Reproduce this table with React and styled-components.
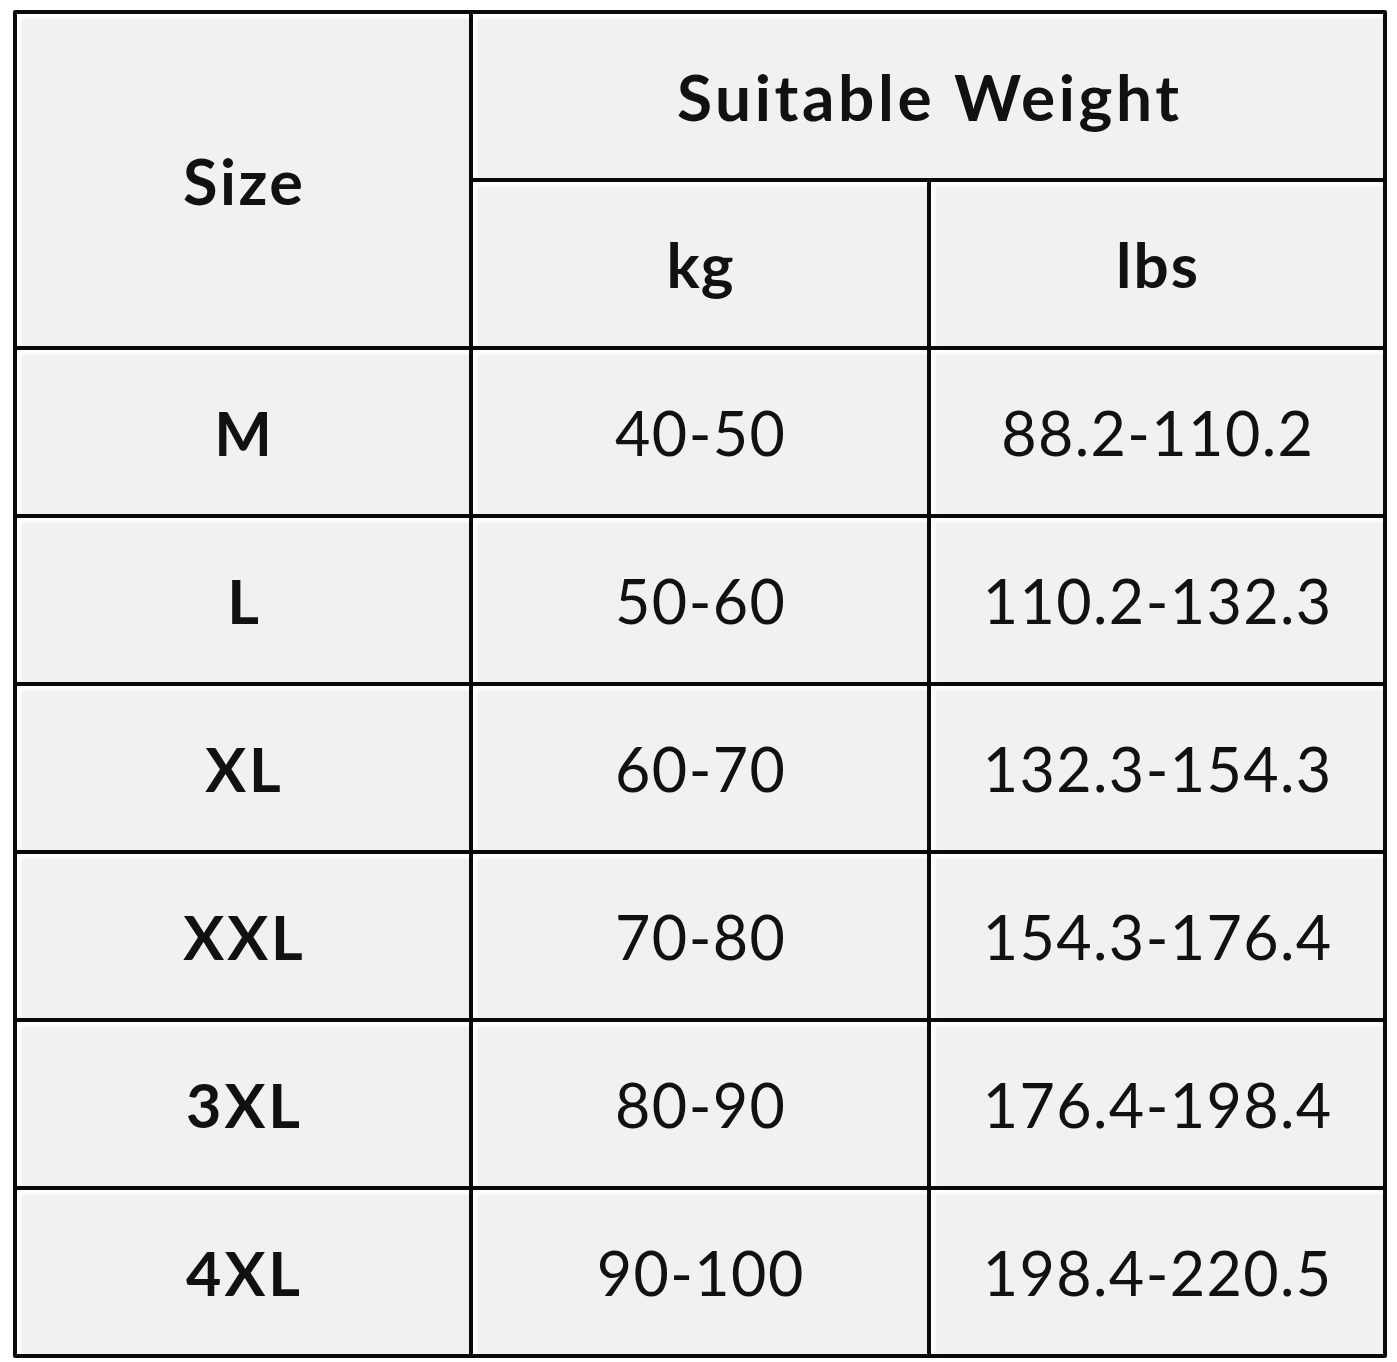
import React from "react";
import styled, { createGlobalStyle } from "styled-components";

const Global = createGlobalStyle`
  html, body { margin: 0; padding: 0; background: #ffffff; }
  body { font-family: Lato, "Open Sans", sans-serif; }
`;

const Page = styled.div`
  padding: 10px 0 0 13px;
`;

const Grid = styled.div`
  display: grid;
  grid-template-columns: 452px 454px 452px;
  grid-template-rows: repeat(8, 164px);
  gap: 4px;
  padding: 4px;
  width: max-content;
  background: #0a0a0a;
  border-radius: 2px;
`;

const Cell = styled.div`
  display: flex;
  align-items: center;
  justify-content: center;
  background: #f1f1f1;
  box-shadow: inset 5px 5px 3px -1px #ffffff;
  color: #111111;
  font-family: Lato, "Open Sans", sans-serif;
  font-size: ${(p) => p.$size || "61px"};
  font-weight: ${(p) => (p.$bold ? 700 : 400)};
  letter-spacing: ${(p) => p.$ls || "1.4px"};
  padding-left: ${(p) => p.$ls || "1.4px"};
  grid-column: ${(p) => p.$col || "auto"};
  grid-row: ${(p) => p.$row || "auto"};
`;

const rows = [
  ["M", "40-50", "88.2-110.2"],
  ["L", "50-60", "110.2-132.3"],
  ["XL", "60-70", "132.3-154.3"],
  ["XXL", "70-80", "154.3-176.4"],
  ["3XL", "80-90", "176.4-198.4"],
  ["4XL", "90-100", "198.4-220.5"],
];

export default function App() {
  return (
    <Page>
      <Global />
      <Grid>
        <Cell $bold $size="63px" $ls="2.5px" $row="1 / span 2" $col="1">Size</Cell>
        <Cell $bold $size="64px" $ls="3.6px" $col="2 / span 2">Suitable Weight</Cell>
        <Cell $bold $size="62px" $ls="1px">kg</Cell>
        <Cell $bold $size="62px" $ls="2px">lbs</Cell>
        {rows.map(([s, kg, lbs]) => (
          <React.Fragment key={s}>
            <Cell $bold $ls="3px">{s}</Cell>
            <Cell>{kg}</Cell>
            <Cell>{lbs}</Cell>
          </React.Fragment>
        ))}
      </Grid>
    </Page>
  );
}
